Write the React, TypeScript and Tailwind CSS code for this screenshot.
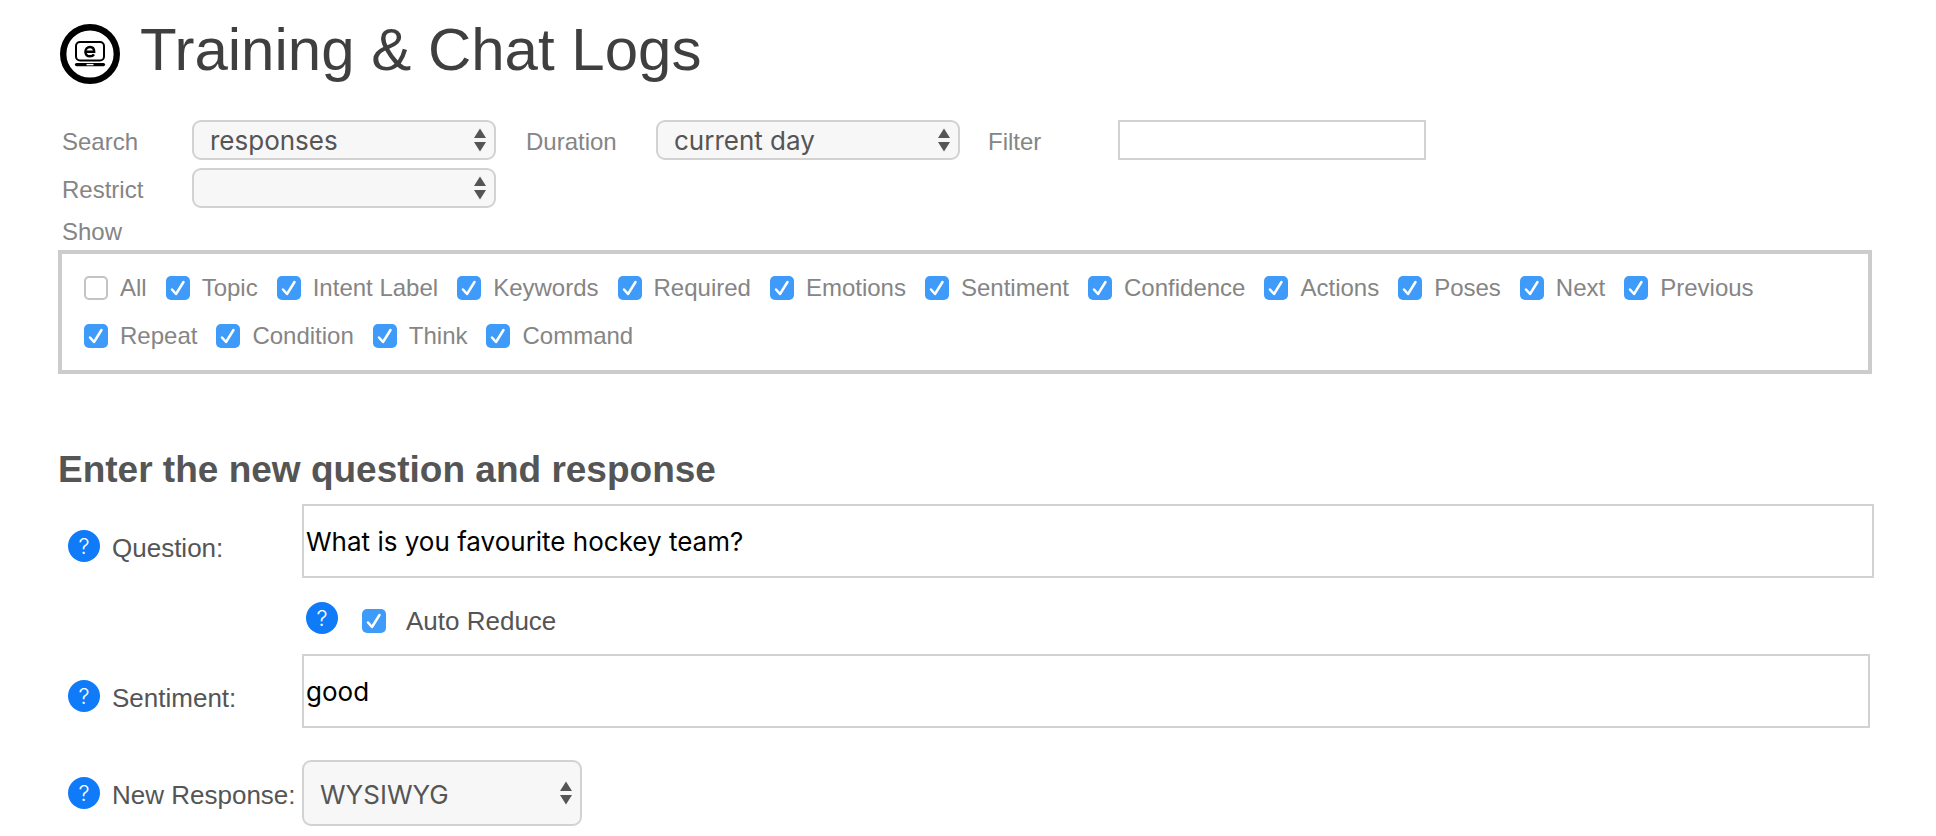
import { useState, type ReactNode } from 'react'
import clsx from 'clsx'

const SHOW_OPTIONS = [
  'All',
  'Topic',
  'Intent Label',
  'Keywords',
  'Required',
  'Emotions',
  'Sentiment',
  'Confidence',
  'Actions',
  'Poses',
  'Next',
  'Previous',
  'Repeat',
  'Condition',
  'Think',
  'Command',
]

function Logo() {
  return (
    <svg viewBox="0 0 60 60" className="size-15 shrink-0" role="img" aria-label="Logo">
      <circle cx="30" cy="30" r="26.8" fill="#fff" stroke="#000" strokeWidth="6.4" />
      <rect x="16" y="18" width="28" height="18.5" rx="4" fill="none" stroke="#000" strokeWidth="2" />
      <path d="M25.8 27.8h8.400c0-3-1.500-4.800-4.200-4.800s-4.600 1.900-4.600 4.700 1.800 4.600 4.600 4.600c1.900 0 3.200-.7 4-2" fill="none" stroke="#000" strokeWidth="2.400" />
      <path d="M16.500 40.600h27" stroke="#000" strokeWidth="3.200" strokeLinecap="round" />
      <path d="M26.500 40.600h7" stroke="#fff" strokeWidth="1.400" />
    </svg>
  )
}

interface SelectBoxProps {
  id: string
  options: string[]
  className?: string
}

function SelectBox({ id, options, className }: SelectBoxProps) {
  return (
    <div className={clsx('relative', className)}>
      <select
        id={id}
        className="block size-full appearance-none rounded-[9px] border-2 border-[#d2d2d2] bg-[#f7f7f7] pt-[2px] pr-8 pl-4 font-[Inter,sans-serif] text-[26px] text-[#555]"
      >
        {options.map((option) => (
          <option key={option}>{option}</option>
        ))}
      </select>
      <svg viewBox="0 0 12 24" className="pointer-events-none absolute inset-y-0 right-[10px] my-auto h-6 w-3" fill="#555">
        <path d="M6 .5 12 10H0zM6 23.500 0 14h12z" />
      </svg>
    </div>
  )
}

interface CheckboxProps {
  id: string
  checked: boolean
  onChange: (checked: boolean) => void
}

function Checkbox({ id, checked, onChange }: CheckboxProps) {
  return (
    <span className="relative size-6 shrink-0">
      <input
        id={id}
        type="checkbox"
        checked={checked}
        onChange={(event) => onChange(event.target.checked)}
        className="block size-6 appearance-none rounded-[5px] border-2 border-[#c4c4c4] bg-white checked:border-0 checked:bg-[#3f9bfa]"
      />
      {checked && (
        <svg viewBox="0 0 24 24" className="pointer-events-none absolute inset-0" fill="none" stroke="#fff" strokeWidth="2.500" strokeLinecap="round" strokeLinejoin="round">
          <path d="M6 13.500 10 18 17.500 6" />
        </svg>
      )}
    </span>
  )
}

function HelpButton({ topic }: { topic: string }) {
  return (
    <button
      type="button"
      aria-label={`Help: ${topic}`}
      className="size-8 shrink-0 rounded-full bg-[#0f7bf8] text-center font-[Inter,sans-serif] text-[22px] leading-8 font-light text-white"
    >
      ?
    </button>
  )
}

interface FieldLabelProps {
  htmlFor: string
  className?: string
  children: ReactNode
}

function FieldLabel({ htmlFor, className, children }: FieldLabelProps) {
  return (
    <div className={clsx('flex items-center gap-3 pl-[10px]', className)}>
      <HelpButton topic={String(children)} />
      <label htmlFor={htmlFor} className="pt-1 whitespace-nowrap">
        {children}
      </label>
    </div>
  )
}

const FILTER_LABEL = 'h-10 leading-[44px]'
const TEXT_INPUT = 'block border-2 border-[#d2d2d2] bg-white px-[2px] font-[Inter,sans-serif] text-[26px] text-black'

export default function App() {
  const [shown, setShown] = useState<string[]>(SHOW_OPTIONS.slice(1))
  const [autoReduce, setAutoReduce] = useState(true)

  function toggle(option: string, checked: boolean) {
    setShown((current) => (checked ? [...current, option] : current.filter((item) => item !== option)))
  }

  return (
    <main className="bg-white pt-5 pr-[62px] pb-2 pl-[58px] font-['Liberation_Sans',Arial,sans-serif]">
      <header className="flex items-end gap-5 pl-[2px]">
        <Logo />
        <h1 className="pb-1 text-[60px] leading-[60px] text-[#3f3f3f]">Training &amp; Chat Logs</h1>
      </header>

      <section className="pt-9 text-2xl text-[#858585]">
        <div className="grid grid-cols-[130px_304px_30px_130px_304px_28px_130px_308px] gap-y-2 pl-1">
          <label htmlFor="search" className={FILTER_LABEL}>Search</label>
          <SelectBox id="search" options={['responses']} className="h-10" />
          <label htmlFor="duration" className={clsx(FILTER_LABEL, 'col-start-4')}>Duration</label>
          <SelectBox id="duration" options={['current day']} className="h-10" />
          <label htmlFor="filter" className={clsx(FILTER_LABEL, 'col-start-7')}>Filter</label>
          <input id="filter" type="text" className={clsx(TEXT_INPUT, 'h-10')} />
          <label htmlFor="restrict" className={clsx(FILTER_LABEL, 'col-start-1')}>Restrict</label>
          <SelectBox id="restrict" options={['']} className="h-10" />
        </div>

        <fieldset className="mt-[6px] mr-[2px]">
          <legend className="pl-1 leading-9">Show</legend>
          <div className="flex flex-wrap gap-x-[19px] border-4 border-[#ccc] px-[22px] py-[10px]">
            {SHOW_OPTIONS.map((option) => (
              <div key={option} className="flex h-12 items-center gap-3">
                <Checkbox
                  id={`show-${option}`}
                  checked={shown.includes(option)}
                  onChange={(checked) => toggle(option, checked)}
                />
                <label htmlFor={`show-${option}`}>{option}</label>
              </div>
            ))}
          </div>
        </fieldset>
      </section>

      <section className="pt-[76px] text-[26px] text-[#555]">
        <h2 className="text-[37px] leading-10 font-bold">Enter the new question and response</h2>
        <div className="mt-[14px] grid grid-cols-[244px_1fr]">
          <FieldLabel htmlFor="question" className="pt-[10px]">Question:</FieldLabel>
          <input id="question" type="text" defaultValue="What is you favourite hockey team?" className={clsx(TEXT_INPUT, 'h-[74px]')} />

          <div className="col-start-2 flex h-[76px] items-center pt-1 pl-1">
            <HelpButton topic="Auto Reduce" />
            <div className="ml-6 flex items-center gap-5 pt-[6px]">
              <Checkbox id="auto-reduce" checked={autoReduce} onChange={setAutoReduce} />
              <label htmlFor="auto-reduce">Auto Reduce</label>
            </div>
          </div>

          <FieldLabel htmlFor="sentiment" className="pt-[10px]">Sentiment:</FieldLabel>
          <input id="sentiment" type="text" defaultValue="good" className={clsx(TEXT_INPUT, 'mr-1 h-[74px]')} />

          <FieldLabel htmlFor="new-response" className="mt-8">New Response:</FieldLabel>
          <SelectBox id="new-response" options={['WYSIWYG']} className="mt-8 h-[66px] w-[280px]" />
        </div>
      </section>
    </main>
  )
}
